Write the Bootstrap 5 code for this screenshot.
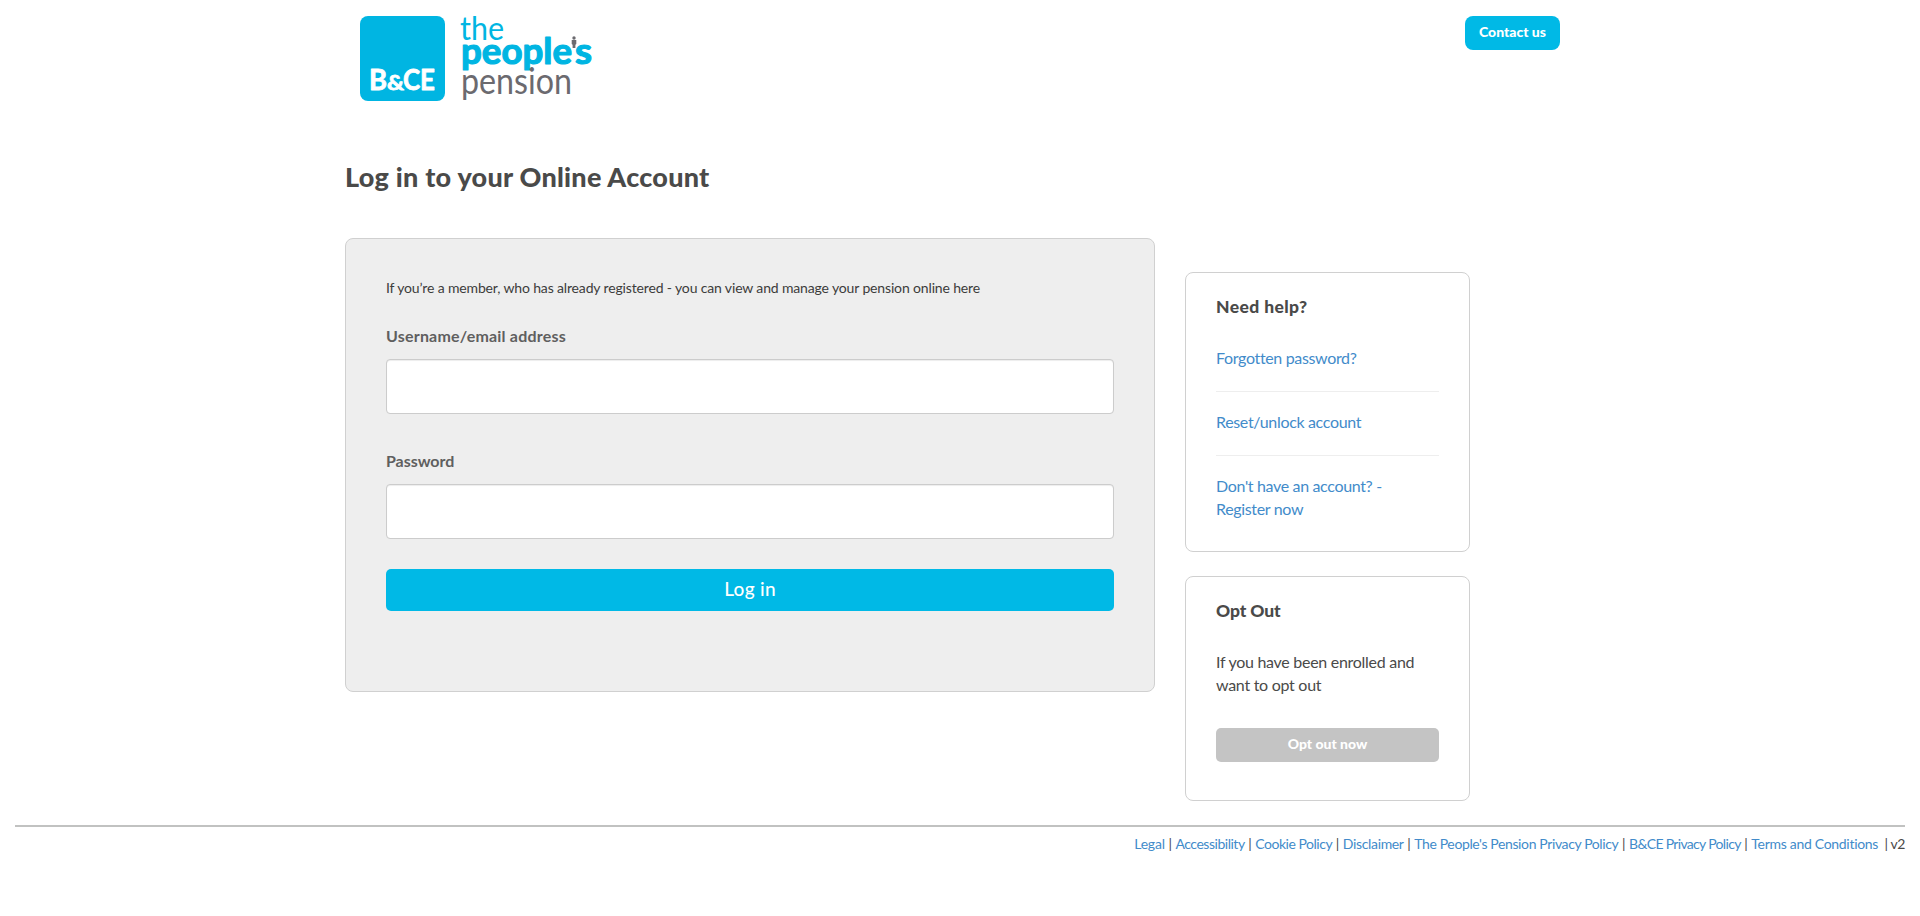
<!DOCTYPE html>
<html lang="en">
<head>
<meta charset="utf-8">
<meta name="viewport" content="width=device-width, initial-scale=1">
<title>Log in to your Online Account</title>
<link href="https://cdn.jsdelivr.net/npm/bootstrap@5.3.0/dist/css/bootstrap.min.css" rel="stylesheet">
<script src="https://cdn.jsdelivr.net/npm/bootstrap@5.3.0/dist/js/bootstrap.bundle.min.js" defer></script>
<style>
body{font-family:Lato,"Open Sans",sans-serif;font-size:16px;line-height:23px;color:#4a4a49;background:#fff}
a{color:#428bca;text-decoration:none}
.page-wrap{max-width:1260px;padding:0 15px}
.site-head{height:138px;padding:16px 15px 0}
.brand-logo{overflow:visible}
.btn-brand,.btn-brand:hover{background:#00b9e6;color:#fff;border:0}
.btn-contact{width:95px;height:34px;border-radius:8px;padding:0 0 3px;font-size:14px;font-weight:900}
.page-title{font-size:27px;line-height:30px;font-weight:900;letter-spacing:.25px;margin:24px 0 46px;height:30px}
.login-panel{width:810px;height:454px;border:1px solid #d0d0d0;border-radius:8px;background:#eee;padding:39px 40px 0}
.intro{font-size:14px;line-height:20px;margin-bottom:28px;color:#3c3c3b;letter-spacing:-.146px}
.form-label{font-weight:700;color:#5f5f5f;line-height:20px;margin-bottom:13px;display:block;letter-spacing:.2px}
.form-label-next{margin-top:37px;letter-spacing:-.05px}
.login-panel .form-control{height:55px;border:1px solid #ccc;border-radius:4px;box-shadow:inset 0 1px 1px rgba(0,0,0,.075)}
.btn-login{height:42px;padding:0 0 1px;font-size:19px;font-weight:500;letter-spacing:.3px;border-radius:5px;margin-top:30px}
.side-col{width:285px;margin-left:30px;padding-top:34px}
.side-box{border:1px solid #d0d0d0;border-radius:8px;padding:20px 30px 0;letter-spacing:-.34px}
.help-box{height:280px}
.opt-box{height:225px}
.side-box h2{font-size:17.5px;line-height:28px;font-weight:900;margin:0 0 25px;letter-spacing:.4px}
.opt-box h2{letter-spacing:-.1px}
.side-box hr{margin:22px 0 18px;border:0;border-top:1px solid #eee;opacity:1}
.side-box p{margin-bottom:32px;letter-spacing:-.28px}
.btn-opt{height:34px;padding:0 0 3px;font-size:14px;font-weight:900;letter-spacing:0;border-radius:5px;background:#c4c4c4;color:#fff;border:0}
.site-foot{margin:24px 15px 0;border-top:2px solid #c1c2c1;padding-top:7px;font-size:14px;line-height:20px;text-align:right}
.site-foot a{letter-spacing:-.38px}
.site-foot a:nth-child(1){letter-spacing:-.2px}
.site-foot a:nth-child(2),.site-foot a:nth-child(3){letter-spacing:-.48px}
.site-foot a:nth-child(4){letter-spacing:-.35px}
.site-foot a:nth-child(6){letter-spacing:-.68px}
.site-foot a:nth-child(7){letter-spacing:-.3px}
.foot-version{letter-spacing:-.4px}
</style>
</head>
<body>
<div class="container-fluid page-wrap">
<header class="site-head d-flex justify-content-between align-items-start">
<svg class="brand-logo" width="235" height="90" role="img" aria-label="B&amp;CE The People's Pension" font-family="Lato, sans-serif">
<rect width="85" height="85" rx="8" fill="#00b5e2"/>
<g fill="#fff" stroke="#fff" stroke-width=".8" stroke-linejoin="round" font-weight="700">
<text x="9" y="74" font-size="28" textLength="18" lengthAdjust="spacingAndGlyphs">B</text>
<text x="27" y="74" font-size="21" textLength="17" lengthAdjust="spacingAndGlyphs">&amp;</text>
<text x="43" y="74" font-size="28" textLength="32" lengthAdjust="spacingAndGlyphs">CE</text>
</g>
<text x="100" y="24" font-size="33" textLength="44" lengthAdjust="spacingAndGlyphs" fill="#00b5e2">the</text>
<g fill="#00b5e2" stroke="#00b5e2" stroke-width="1.2" stroke-linejoin="round" font-weight="700">
<text x="101" y="48" font-size="36" textLength="111" lengthAdjust="spacingAndGlyphs">people</text>
<text x="215" y="48" font-size="36" textLength="17" lengthAdjust="spacingAndGlyphs">s</text>
</g>
<g fill="#6b6a6f"><circle cx="214" cy="22" r="1.700"/><path d="M211.700 24h4.600v4l-.9.700v3.300h-2.800v-3.300l-.9-.7z"/></g>
<text x="101" y="78" font-size="36" textLength="111" lengthAdjust="spacingAndGlyphs" fill="#6b6a6f">pension</text>
</svg>
<a class="btn btn-brand btn-contact d-flex align-items-center justify-content-center" href="#">Contact us</a>
</header>
<main>
<h1 class="page-title">Log in to your Online Account</h1>
<div class="d-flex align-items-start">
<form class="login-panel">
<p class="intro">If you’re a member, who has already registered - you can view and manage your pension online here</p>
<label class="form-label" for="user">Username/email address</label>
<input class="form-control" id="user" type="text">
<label class="form-label form-label-next" for="pass">Password</label>
<input class="form-control" id="pass" type="password">
<button class="btn btn-brand btn-login w-100" type="button">Log in</button>
</form>
<aside class="side-col">
<section class="side-box help-box">
<h2>Need help?</h2>
<a href="#">Forgotten password?</a>
<hr>
<a href="#">Reset/unlock account</a>
<hr>
<a href="#">Don't have an account? -<br>Register now</a>
</section>
<section class="side-box opt-box mt-4">
<h2>Opt Out</h2>
<p>If you have been enrolled and<br>want to opt out</p>
<button class="btn btn-opt w-100" type="button">Opt out now</button>
</section>
</aside>
</div>
</main>
</div>
<footer class="site-foot"><a href="#">Legal</a> | <a href="#">Accessibility</a> | <a href="#">Cookie Policy</a> | <a href="#">Disclaimer</a> | <a href="#">The People's Pension Privacy Policy</a> | <a href="#">B&amp;CE Privacy Policy</a> | <a href="#">Terms and Conditions</a><span class="foot-version"> &nbsp;| v2</span></footer>
</body>
</html>
